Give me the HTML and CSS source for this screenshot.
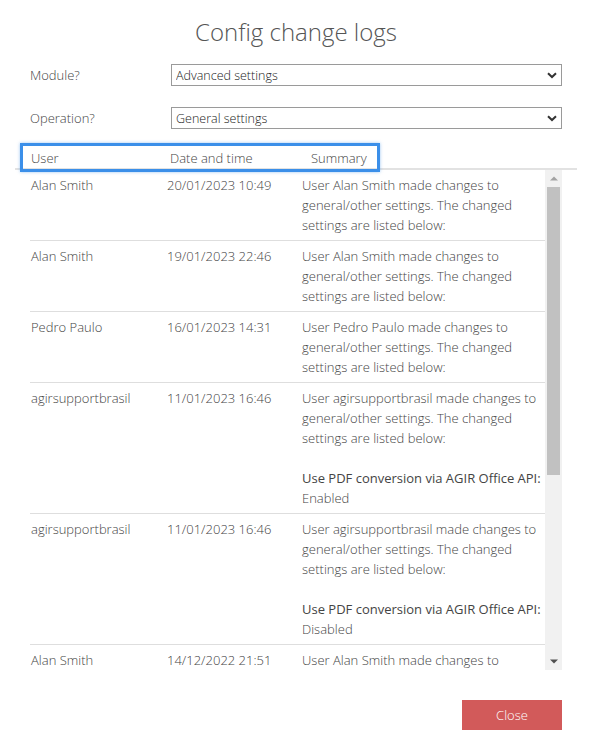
FILE: index.html
```html
<!DOCTYPE html>
<html>
<head>
<meta charset="utf-8">
<title>Config change logs</title>
<link rel="stylesheet" href="styles.css">
</head>
<body>
<div class="dialog">
  <h1 class="title">Config change logs</h1>

  <div class="field">
    <label class="field-label">Module?</label>
    <div class="select-wrap">
      <select class="select"><option>Advanced settings</option></select>
      <svg class="chev" width="10" height="7" viewBox="0 0 10 7"><path d="M1 1.2 L5 5 L9 1.2" fill="none" stroke="#333" stroke-width="2"/></svg>
    </div>
  </div>

  <div class="field">
    <label class="field-label">Operation?</label>
    <div class="select-wrap">
      <select class="select"><option>General settings</option></select>
      <svg class="chev" width="10" height="7" viewBox="0 0 10 7"><path d="M1 1.2 L5 5 L9 1.2" fill="none" stroke="#333" stroke-width="2"/></svg>
    </div>
  </div>

  <div class="grid">
    <div class="grid-head">
      <span class="h-user">User</span>
      <span class="h-date">Date and time</span>
      <span class="h-sum">Summary</span>
    </div>
    <div class="highlight"></div>
    <div class="grid-body">
      <div class="rows">
        <div class="row">
          <div class="c-user">Alan Smith</div>
          <div class="c-date">20/01/2023 10:49</div>
          <div class="c-sum"><p>User Alan Smith made changes to general/other settings. The changed settings are listed below:</p></div>
        </div>
        <div class="row">
          <div class="c-user">Alan Smith</div>
          <div class="c-date">19/01/2023 22:46</div>
          <div class="c-sum"><p>User Alan Smith made changes to general/other settings. The changed settings are listed below:</p></div>
        </div>
        <div class="row">
          <div class="c-user">Pedro Paulo</div>
          <div class="c-date">16/01/2023 14:31</div>
          <div class="c-sum"><p>User Pedro Paulo made changes to general/other settings. The changed settings are listed below:</p></div>
        </div>
        <div class="row">
          <div class="c-user">agirsupportbrasil</div>
          <div class="c-date">11/01/2023 16:46</div>
          <div class="c-sum"><p>User agirsupportbrasil made changes to general/other settings. The changed settings are listed below:</p>
            <p class="change"><span class="setting">Use PDF conversion via AGIR Office API:</span> Enabled</p></div>
        </div>
        <div class="row">
          <div class="c-user">agirsupportbrasil</div>
          <div class="c-date">11/01/2023 16:46</div>
          <div class="c-sum"><p>User agirsupportbrasil made changes to general/other settings. The changed settings are listed below:</p>
            <p class="change"><span class="setting">Use PDF conversion via AGIR Office API:</span> Disabled</p></div>
        </div>
        <div class="row">
          <div class="c-user">Alan Smith</div>
          <div class="c-date">14/12/2022 21:51</div>
          <div class="c-sum"><p>User Alan Smith made changes to general/other settings. The changed settings are listed below:</p></div>
        </div>
      </div>
      <div class="scrollbar">
        <div class="sb-btn"><svg width="8" height="5" viewBox="0 0 8 5"><path d="M0 4.5 L4 0.5 L8 4.5 Z" fill="#a3a3a3"/></svg></div>
        <div class="sb-track"><div class="sb-thumb"></div></div>
        <div class="sb-btn"><svg width="8" height="5" viewBox="0 0 8 5"><path d="M0 0.5 L4 4.5 L8 0.5 Z" fill="#505050"/></svg></div>
      </div>
    </div>
  </div>

  <div class="footer">
    <button class="btn-close">Close</button>
  </div>
</div>
</body>
</html>
```

FILE: styles.css
```css
* { box-sizing: border-box; }
html, body { margin: 0; padding: 0; background: #fff; }
body {
  font-family: "Open Sans", "Noto Sans", sans-serif;
  font-size: 13px;
  color: #444;
}
.dialog {
  width: 594px;
  padding: 15px 17px 0 15px;
  position: relative;
}
.title {
  margin: 0;
  font-size: 24px;
  line-height: 34px;
  font-weight: 300;
  color: #555;
  text-align: center;
}
.field {
  display: flex;
  align-items: center;
  padding: 0 15px;
  height: 22px;
  margin-top: 15px;
}
.field + .field { margin-top: 21px; }
.field-label {
  width: 141px;
  font-weight: 300;
  color: #444;
}
.select-wrap {
  position: relative;
  flex: 1;
  height: 22px;
}
.select {
  -webkit-appearance: none;
  appearance: none;
  width: 100%;
  height: 22px;
  border: 1px solid #9a9a9a;
  border-radius: 0;
  background: #fff;
  font-family: inherit;
  font-size: 12.5px;
  font-weight: 300;
  color: #222;
  padding: 0 20px 0 4px;
  margin: 0;
}
.chev {
  position: absolute;
  right: 5px;
  top: 8px;
  pointer-events: none;
}
.grid { margin-top: 19px; position: relative; }
.grid-head {
  display: flex;
  height: 22px;
  align-items: center;
  border-bottom: 2px solid #e2e2e2;
  padding-left: 16px;
  color: #444;
  font-weight: 300;
}
.h-user { width: 139px; }
.h-date { width: 141px; }
.highlight {
  position: absolute;
  left: 5px;
  top: -5px;
  width: 360px;
  height: 29px;
  border: 3px solid #3b8fe9;
  box-shadow: 0 0 3px rgba(59,143,233,0.5);
  pointer-events: none;
}
.grid-body {
  display: flex;
  height: 500px;
  padding: 0 15px;
}
.rows {
  flex: 1;
  overflow: hidden;
}
.row {
  display: flex;
  padding: 5px 0;
  border-bottom: 1px solid #dedede;
  line-height: 20px;
  font-weight: 300;
}
.c-user { width: 136px; padding-left: 1px; }
.c-date { width: 136px; padding-left: 1px; }
.c-sum { flex: 1; padding-right: 4px; }
.c-sum p { margin: 0; }
.c-sum p.change { margin-top: 20px; }
.setting { font-weight: 400; color: #444; }
.scrollbar {
  width: 17px;
  background: #f1f1f1;
  display: flex;
  flex-direction: column;
}
.sb-btn {
  height: 17px;
  display: flex;
  align-items: center;
  justify-content: center;
}
.sb-track { flex: 1; padding: 0 2px; }
.sb-thumb {
  height: 288px;
  background: #c1c1c1;
}
.footer {
  display: flex;
  justify-content: flex-end;
  margin-top: 30px;
  padding-right: 15px;
}
.btn-close {
  width: 100px;
  height: 30px;
  border: none;
  background: #d25a5a;
  color: #fff;
  font-family: inherit;
  font-size: 13px;
  font-weight: 300;
  cursor: pointer;
}
```
